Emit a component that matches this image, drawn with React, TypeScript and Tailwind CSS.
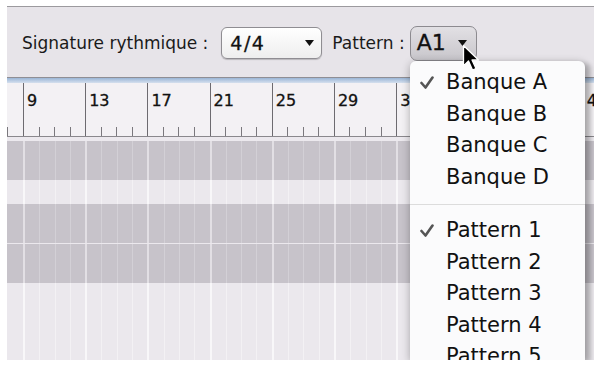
import React from "react";

const bars = [9, 13, 17, 21, 25, 29, 33, 37, 41, 45];

function Arrow() {
  return (
    <svg width="9" height="6" viewBox="0 0 9 6" className="shrink-0">
      <path d="M0 0 L9 0 L4.5 6 Z" fill="#111" />
    </svg>
  );
}

function Ruler() {
  return (
    <div className="flex h-[54px] shrink-0 overflow-hidden border-b border-[#8a888d] bg-[#f3f1f4]">
      <div className="flex w-[16px] shrink-0 items-end">
        <div className="h-[9px] w-px bg-[#7a787d]" />
      </div>
      {bars.map((n) => (
        <div key={n} className="flex w-[62.2px] shrink-0 flex-col border-l border-[#6d6b70]">
          <span className="pl-[3px] pt-[10px] text-[16px] leading-none text-[#111] [-webkit-text-stroke:0.3px_#111]">{n}</span>
          <div className="mt-auto flex h-[9px]">
            <div className="flex-1" />
            <div className="flex-1 border-l border-[#7a787d]" />
            <div className="flex-1 border-l border-[#7a787d]" />
            <div className="flex-1 border-l border-[#7a787d]" />
          </div>
        </div>
      ))}
    </div>
  );
}

function GridRow({ box, bar, beat }: { box: string; bar: string; beat: string }) {
  return (
    <div className={`flex overflow-hidden ${box}`}>
      <div className="w-[16px] shrink-0" />
      {bars.map((n) => (
        <div key={n} className={`flex w-[62.2px] shrink-0 border-l-2 ${bar}`}>
          <div className="flex-1" />
          <div className={`flex-1 border-l ${beat}`} />
          <div className={`flex-1 border-l ${beat}`} />
          <div className={`flex-1 border-l ${beat}`} />
        </div>
      ))}
    </div>
  );
}

function Check() {
  return (
    <svg width="14" height="13" viewBox="0 0 14 13" className="shrink-0">
      <path d="M1.5 7 L5.5 11.5 L12.5 1.5" fill="none" stroke="#555" strokeWidth="2.6" strokeLinecap="round" strokeLinejoin="round" />
    </svg>
  );
}

function Item({ label, checked }: { label: string; checked?: boolean }) {
  return (
    <div className="flex h-[31.5px] items-center">
      <div className="flex w-[36px] shrink-0 justify-start pl-[10px]">{checked ? <Check /> : null}</div>
      <span className="text-[21px] leading-none text-[#111]">{label}</span>
    </div>
  );
}

export default function App() {
  const grey = { box: "h-[39px] shrink-0 bg-[#c7c3ca]", bar: "border-[#e2dfe4]", beat: "border-[#d3d0d6]" };
  const light = { bar: "border-[#f8f7f9]", beat: "border-[#f3f1f4]" };
  return (
    <div className="h-[365px] w-[601px] bg-white pb-[5px] pl-[7px] pr-[7px] pt-[6px] font-['DejaVu_Sans',sans-serif]">
      <div className="relative flex h-full flex-col overflow-hidden border-t border-[#9c9a9e]">
        <div className="flex h-[70px] shrink-0 items-center bg-[#e7e4e9] pl-[15px] pt-[2px] text-[17px] text-[#1a1a1a]">
          <span className="leading-none">Signature rythmique :</span>
          <div className="ml-[13px] flex h-[32px] w-[101px] items-center rounded-[6px] border border-[#8f8d92] bg-gradient-to-b from-white to-[#eeeeee] pl-[8px] pr-[7px] shadow-[0_1px_1px_rgba(0,0,0,0.2)]">
            <span className="text-[19px] leading-none tracking-[1.5px] text-[#111] [-webkit-text-stroke:0.3px_#111]">4/4</span>
            <div className="ml-auto">
              <Arrow />
            </div>
          </div>
          <span className="ml-[10px] leading-none">Pattern :</span>
          <div className="ml-[5px] flex h-[35px] w-[67px] items-center rounded-[7px] border border-[#8c8a8f] bg-gradient-to-b from-[#e2e0e4] to-[#c8c6cb] pl-[6px] pr-[9px]">
            <span className="text-[22px] leading-none text-[#111] [-webkit-text-stroke:0.3px_#111]">A1</span>
            <div className="ml-auto">
              <Arrow />
            </div>
          </div>
        </div>
        <div className="h-[6px] shrink-0 border-t border-[#8f8e94] bg-gradient-to-b from-[#9bb5d6] to-[#d5e0ee]" />
        <Ruler />
        <div className="h-[4px] shrink-0 bg-[#ece9ee]" />
        <GridRow {...grey} />
        <GridRow box="h-[24px] shrink-0 bg-[#ebe8ed]" {...light} />
        <GridRow {...grey} />
        <div className="h-px shrink-0 bg-[#ebe8ed]" />
        <GridRow {...grey} />
        <GridRow box="flex-1 bg-[#ebe8ed]" {...light} />

        <div className="absolute bottom-0 left-[403px] top-[54px] w-[175px] rounded-t-[6px] bg-[#fbfbfc] pt-[6px] shadow-[6px_2px_4px_rgba(0,0,0,0.18),0_2px_8px_rgba(0,0,0,0.3)]">
          <Item label="Banque A" checked />
          <Item label="Banque B" />
          <Item label="Banque C" />
          <Item label="Banque D" />
          <div className="flex h-[22px] items-center">
            <div className="h-px w-full bg-[#dcdcdc]" />
          </div>
          <Item label="Pattern 1" checked />
          <Item label="Pattern 2" />
          <Item label="Pattern 3" />
          <Item label="Pattern 4" />
          <Item label="Pattern 5" />
        </div>

        <svg className="absolute left-[455px] top-[37px]" width="18" height="28" viewBox="0 0 18 28">
          <path d="M1.5 1.5 L1.5 22 L6.5 17 L10.5 26 L14 24.5 L10 16 L16.5 16 Z" fill="#000" stroke="#fff" strokeWidth="1.3" strokeLinejoin="round" />
        </svg>
      </div>
    </div>
  );
}
